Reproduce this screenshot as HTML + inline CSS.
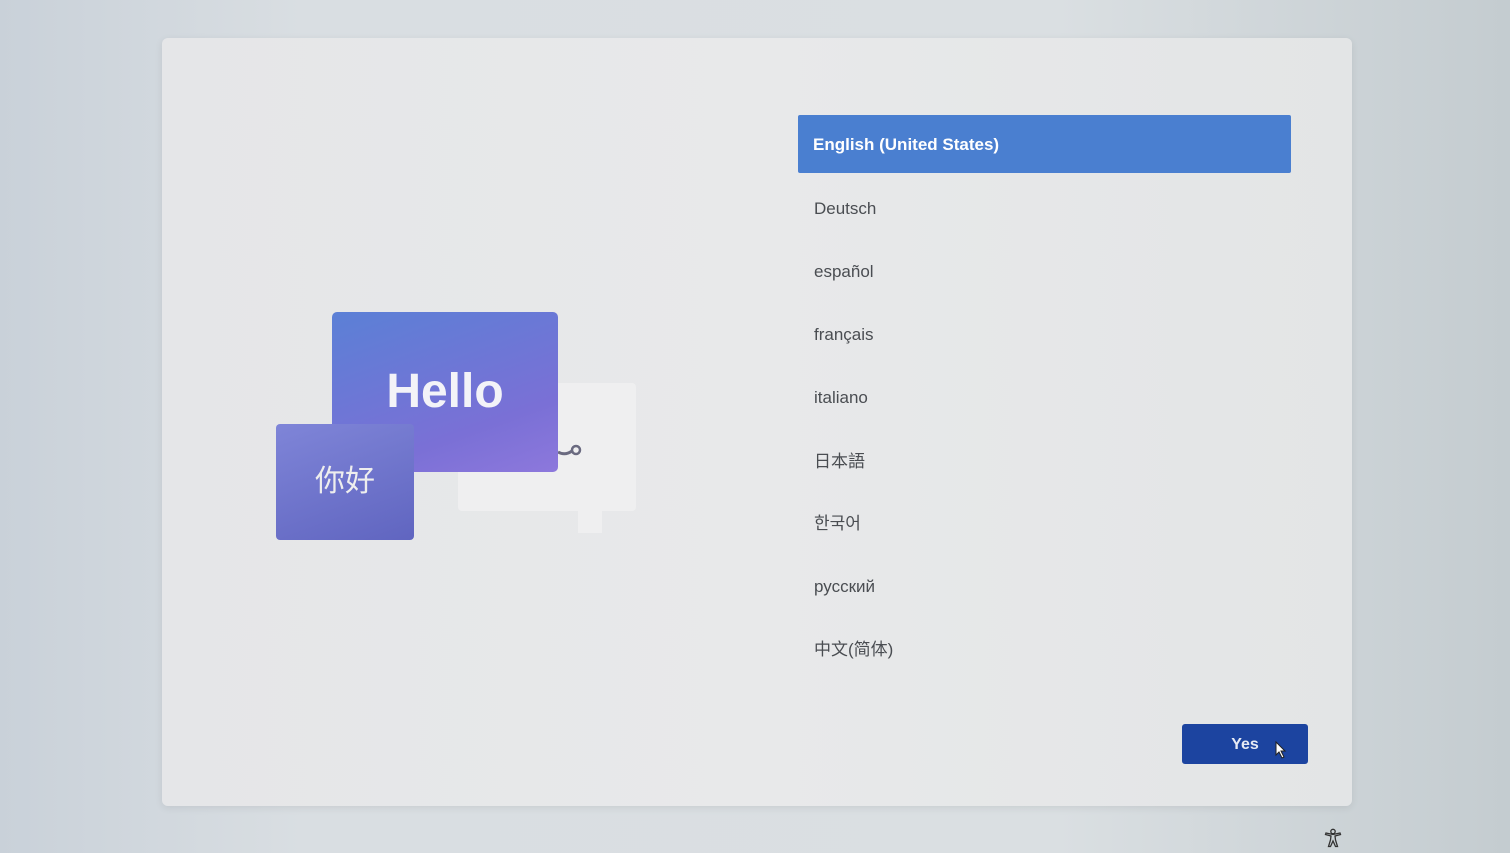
<!DOCTYPE html>
<html><head><meta charset="utf-8"><style>
html,body{margin:0;padding:0;width:1510px;height:853px;overflow:hidden}
body{background:linear-gradient(90deg,#c9d1d9 0%,#d9dee2 20%,#dadfe2 70%,#c4ccd0 100%);font-family:"Liberation Sans","Noto Sans CJK SC",sans-serif;position:relative}
.panel{position:absolute;left:162px;top:38px;width:1190px;height:768px;background:linear-gradient(90deg,#e5e6e8,#e8e9ea 50%,#e3e5e6);border-radius:6px;box-shadow:0 2px 8px rgba(0,0,0,.08)}
.item{position:absolute;left:814px;font-size:17px;color:#4a4d52}
.sel{position:absolute;left:798px;top:115px;width:493px;height:58px;background:#4a7fd0;border-radius:2px}
.sel span{position:absolute;left:15px;top:20px;color:#fff;font-size:17px;font-weight:bold}
.bubble{position:absolute;left:458px;top:383px;width:178px;height:128px;background:#efeff0;border-radius:4px}
.tail{position:absolute;left:578px;top:505px;width:24px;height:28px;background:#efeff0}
.hello{position:absolute;left:332px;top:312px;width:226px;height:160px;border-radius:5px;background:linear-gradient(160deg,#5b80d6,#7a70d6 70%,#8d78dc);color:#f3f3f8;font-weight:bold;font-size:48px;text-align:center;line-height:160px}
.ni{position:absolute;left:276px;top:424px;width:138px;height:116px;border-radius:4px;background:linear-gradient(160deg,#7f85d8,#6065c0);color:#eee;font-size:30px;text-align:center;line-height:116px}
.yes{position:absolute;left:1182px;top:724px;width:126px;height:40px;background:#1c44a0;border-radius:3px;color:#e6eaf4;font-weight:bold;font-size:16px;text-align:center;line-height:42px}
</style></head><body>
<div class="panel"></div>
<div class="sel"><span>English (United States)</span></div>
<div class="item" style="top:199px">Deutsch</div>
<div class="item" style="top:262px">español</div>
<div class="item" style="top:325px">français</div>
<div class="item" style="top:388px">italiano</div>
<div class="item" style="top:447px">日本語</div>
<div class="item" style="top:509px">한국어</div>
<div class="item" style="top:577px">русский</div>
<div class="item" style="top:635px">中文(简体)</div>
<div class="bubble"></div><div class="tail"></div>
<svg style="position:absolute;left:555px;top:440px" width="32" height="22"><path d="M3 12 Q10 16 17 11" stroke="#6a6a80" stroke-width="3" fill="none"/><circle cx="21" cy="10" r="4" stroke="#6a6a80" stroke-width="2.5" fill="none"/></svg>
<div class="hello">Hello</div>
<div class="ni">你好</div>
<div class="yes">Yes</div>
<svg style="position:absolute;left:1274px;top:741px" width="14" height="18"><path d="M2 1 L2 14 L5 11 L8 17 L10 16 L7 10 L11 10 Z" fill="#fff" stroke="#222" stroke-width="1"/></svg>
<svg style="position:absolute;left:1324px;top:828px" width="18" height="20" viewBox="0 0 18 20"><g fill="none" stroke="#333" stroke-width="1.3"><circle cx="9" cy="3.5" r="2.2"/><path d="M1.5 6.5 L7 8 L6.5 12 L4.5 18.5 L6.5 18.5 L9 13 L11.5 18.5 L13.5 18.5 L11.5 12 L11 8 L16.5 6.5 L16 5 L9 6.5 L2 5 Z"/></g></svg>
</body></html>
